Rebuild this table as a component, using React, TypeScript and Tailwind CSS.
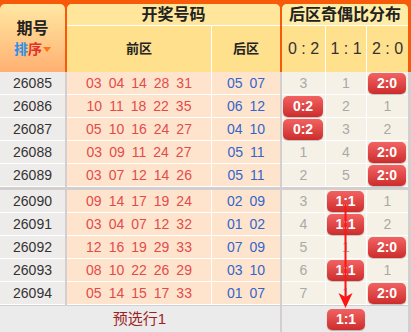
import React from "react";

type Row = { p: string; f: string[]; b: string[]; d: [string, string, string]; hit: 0 | 1 | 2 };

const rows1: Row[] = [
  { p: "26085", f: ["03", "04", "14", "28", "31"], b: ["05", "07"], d: ["3", "1", "2:0"], hit: 2 },
  { p: "26086", f: ["10", "11", "18", "22", "35"], b: ["06", "12"], d: ["0:2", "2", "1"], hit: 0 },
  { p: "26087", f: ["05", "10", "16", "24", "27"], b: ["04", "10"], d: ["0:2", "3", "2"], hit: 0 },
  { p: "26088", f: ["03", "09", "11", "24", "27"], b: ["05", "11"], d: ["1", "4", "2:0"], hit: 2 },
  { p: "26089", f: ["03", "07", "12", "14", "26"], b: ["05", "11"], d: ["2", "5", "2:0"], hit: 2 },
];
const rows2: Row[] = [
  { p: "26090", f: ["09", "14", "17", "19", "24"], b: ["02", "09"], d: ["3", "1:1", "1"], hit: 1 },
  { p: "26091", f: ["03", "04", "07", "12", "32"], b: ["01", "02"], d: ["4", "1:1", "2"], hit: 1 },
  { p: "26092", f: ["12", "16", "19", "29", "33"], b: ["07", "09"], d: ["5", "1", "2:0"], hit: 2 },
  { p: "26093", f: ["08", "10", "22", "26", "29"], b: ["03", "10"], d: ["6", "1:1", "1"], hit: 1 },
  { p: "26094", f: ["05", "14", "15", "17", "33"], b: ["01", "07"], d: ["7", "1", "2:0"], hit: 2 },
];

const font = { fontFamily: '"Liberation Sans", "Noto Sans CJK SC", sans-serif' };

function Badge({ t }: { t: string }) {
  return (
    <div className="mx-[1px] h-[21px] w-[calc(100%-3px)] rounded-[5px] bg-gradient-to-b from-[#f26262] to-[#cc2b2b] shadow-[0_1px_1px_rgba(0,0,0,0.25)] flex items-center justify-center text-white text-[14px] font-bold">
      {t}
    </div>
  );
}

function DistCell({ w, v, hit }: { w: string; v: string; hit: boolean }) {
  return (
    <div className={`${w} h-full border-b border-white bg-[#f5f1e6] flex items-center justify-start`}>
      {hit ? <Badge t={v} /> : <div className="w-full text-center text-[14px] text-[#a9a9a9]">{v}</div>}
    </div>
  );
}

function BodyRow({ r }: { r: Row }) {
  return (
    <div className="flex h-[23px]">
      <div className="w-[65px] border-b border-white bg-[#eeeceb] flex items-center justify-center text-[14px] text-[#333]">
        {r.p}
      </div>
      <div className="w-[2px] bg-[#d3cfcf]" />
      <div className="w-[145px] border-b border-r border-white bg-[#ffe4cd] flex items-center justify-center gap-[7px] text-[14px] text-[#e34b4b]">
        {r.f.map((n, i) => (
          <span key={i}>{n}</span>
        ))}
      </div>
      <div className="w-[68px] border-b border-white bg-[#ffe4cd] flex items-center justify-center gap-[7px] text-[14px] text-[#3366cc]">
        {r.b.map((n, i) => (
          <span key={i}>{n}</span>
        ))}
      </div>
      <div className="w-[2px] bg-[#d3cfcf]" />
      <DistCell w="w-[44px] border-r border-white" v={r.d[0]} hit={r.hit === 0} />
      <DistCell w="w-[41px] border-r border-white" v={r.d[1]} hit={r.hit === 1} />
      <DistCell w="w-[41px]" v={r.d[2]} hit={r.hit === 2} />
      <div className="w-[3px] bg-[#d3cfcf]" />
    </div>
  );
}

export default function App() {
  return (
    <div className="relative w-[411px] h-[332px] overflow-hidden bg-white" style={font}>
      {/* header */}
      <div className="flex gap-[2px] bg-[#f75b0a] pt-[4px] pr-[3px]">
        <div className="w-[65px] h-[68px] rounded-t-[5px] bg-gradient-to-b from-[#ffe8a2] to-[#ffb072] flex flex-col items-center justify-center">
          <div className="text-[16px] font-bold text-[#222] leading-[20px]">期号</div>
          <div className="flex items-center text-[14px] font-bold leading-[18px] mt-[1px]">
            <span className="text-[#2f8fe8]">排</span>
            <span className="text-[#e0302a]">序</span>
            <span className="ml-[1px] mt-[2px] w-0 h-0 border-l-[4px] border-r-[4px] border-t-[5px] border-l-transparent border-r-transparent border-t-[#ff7216]" />
          </div>
        </div>
        <div className="w-[213px] h-[68px] rounded-t-[5px] bg-[#ffe08c] flex flex-col overflow-hidden">
          <div className="h-[22px] border-b border-white bg-[#ffe69a] flex items-center justify-center text-[16px] font-bold text-[#222]">
            开奖号码
          </div>
          <div className="flex flex-1">
            <div className="w-[145px] border-r border-white flex items-center justify-center text-[13px] font-bold text-[#222]">
              前区
            </div>
            <div className="flex-1 flex items-center justify-center text-[13px] font-bold text-[#222]">后区</div>
          </div>
        </div>
        <div className="w-[126px] h-[68px] rounded-t-[5px] bg-[#ffe08c] flex flex-col overflow-hidden">
          <div className="h-[22px] border-b border-white bg-[#ffeda6] flex items-center justify-center text-[16px] font-bold text-[#222]">
            后区奇偶比分布
          </div>
          <div className="flex flex-1 text-[16px] text-[#333]">
            <div className="w-[44px] border-r border-white flex items-center justify-center">0 : 2</div>
            <div className="w-[41px] border-r border-white flex items-center justify-center">1 : 1</div>
            <div className="w-[41px] flex items-center justify-center">2 : 0</div>
          </div>
        </div>
      </div>

      {/* body */}
      {rows1.map((r) => (
        <BodyRow key={r.p} r={r} />
      ))}
      <div className="h-[3px] bg-[#d3cfcf]" />
      {rows2.map((r) => (
        <BodyRow key={r.p} r={r} />
      ))}

      {/* footer */}
      <div className="flex h-[27px] border-t border-[#d3cfcf] bg-[#ebebeb]">
        <div className="w-[67px]" />
        <div className="w-[145px] flex items-center justify-center text-[15px] text-[#9e1f1f]">预选行1</div>
        <div className="w-[68px]" />
        <div className="w-[2px] bg-[#d3cfcf]" />
        <div className="w-[44px]" />
        <div className="w-[41px] flex items-center pt-[1px]">
          <Badge t="1:1" />
        </div>
        <div className="w-[41px]" />
        <div className="w-[3px] bg-[#d3cfcf]" />
      </div>

      {/* arrow overlay */}
      <svg className="absolute left-0 top-0 pointer-events-none" width="411" height="332" viewBox="0 0 411 332">
        <line x1="345.5" y1="204" x2="345.5" y2="297" stroke="#ff1414" strokeWidth="2" />
        <polygon points="345.5,308 338.5,293 345.5,297 352.5,293" fill="#ff1414" />
      </svg>
    </div>
  );
}
